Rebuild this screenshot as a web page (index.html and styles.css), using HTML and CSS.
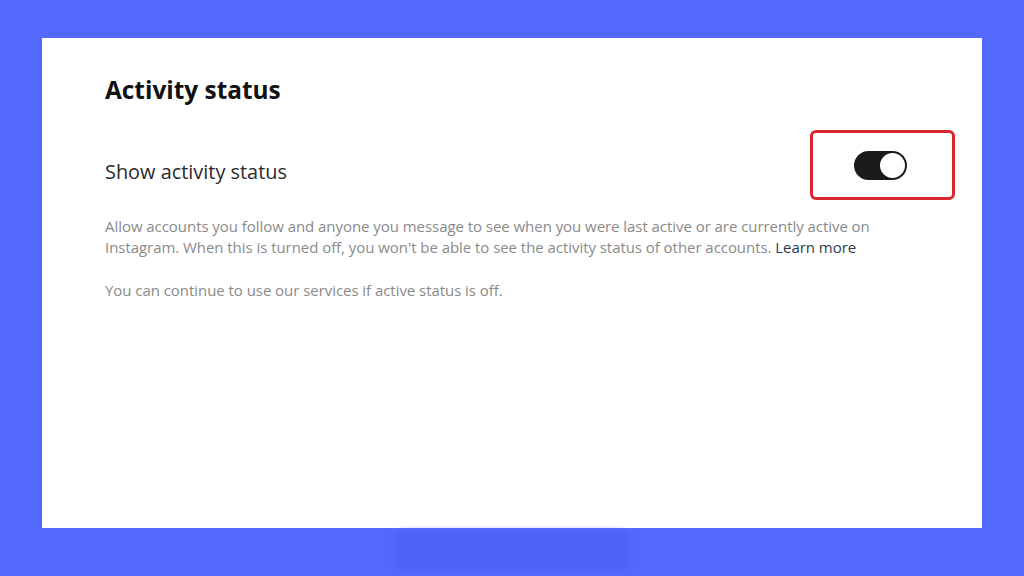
FILE: index.html
```html
<!DOCTYPE html>
<html>
<head>
<meta charset="utf-8">
<link rel="stylesheet" href="styles.css">
</head>
<body>
<div class="stage">
  <div class="card">
    <h1 class="title">Activity status</h1>
    <div class="row">
      <span class="label">Show activity status</span>
      <div class="highlight">
        <div class="toggle"><div class="knob"></div></div>
      </div>
    </div>
    <p class="desc">Allow accounts you follow and anyone you message to see when you were last active or are currently active on<br>Instagram. When this is turned off, you won't be able to see the activity status of other accounts. <a class="link">Learn more</a></p>
    <p class="desc note">You can continue to use our services if active status is off.</p>
  </div>
  <div class="bottom-bar"></div>
</div>
</body>
</html>
```
FILE: styles.css
```css
html, body {
  margin: 0;
  padding: 0;
}
body {
  width: 1024px;
  height: 576px;
  overflow: hidden;
  background: #5468fe;
  font-family: "Open Sans", "Noto Sans", sans-serif;
}
.stage {
  width: 1024px;
  height: 576px;
  padding: 38px 42px 0;
  box-sizing: border-box;
  display: flex;
  flex-direction: column;
  align-items: center;
}
.card {
  width: 940px;
  height: 490px;
  background: #ffffff;
  box-sizing: border-box;
  padding: 37px 27px 0 63px;
  align-self: stretch;
}
.title {
  margin: 0;
  font-size: 24.4px;
  font-weight: 700;
  color: #111111;
  line-height: 30px;
}
.row {
  display: flex;
  justify-content: space-between;
  align-items: center;
  margin-top: 25px;
}
.label {
  font-size: 19.9px;
  color: #2a2a2a;
  line-height: 28px;
  margin-top: 14px;
}
.highlight {
  width: 145px;
  height: 70px;
  box-sizing: border-box;
  border: 3px solid #d9262f;
  border-radius: 6px;
  display: flex;
  align-items: center;
  justify-content: center;
}
.toggle {
  width: 53px;
  height: 29px;
  border-radius: 15px;
  background: #1b1b1b;
  display: flex;
  justify-content: flex-end;
  align-items: center;
  padding: 2px;
  box-sizing: border-box;
  margin-right: 4px;
}
.knob {
  width: 25px;
  height: 25px;
  border-radius: 50%;
  background: #ffffff;
}
.desc {
  margin: 16px 0 0;
  font-size: 15px;
  line-height: 21px;
  color: #8a8a8a;
  letter-spacing: -0.05px;
}
.link {
  color: #2b3a4a;
}
.desc.note {
  margin-top: 22px;
}
.bottom-bar {
  width: 236px;
  height: 40px;
  margin-top: 2px;
  border-radius: 10px;
  background: #4c63f5;
  filter: blur(2px);
}
```
